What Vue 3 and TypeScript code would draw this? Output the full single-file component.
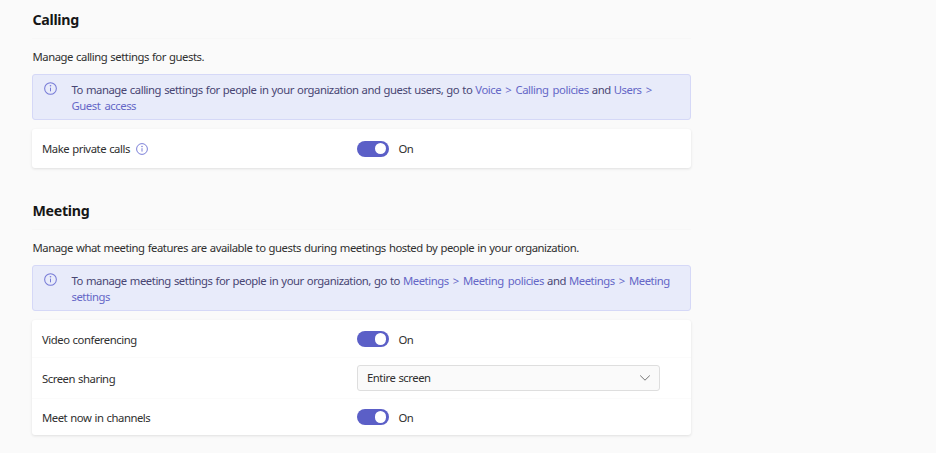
<script setup lang="ts">
import { ref } from 'vue'

interface Part {
  text: string
  link?: boolean
}

interface Row {
  label: string
  info?: boolean
  kind: 'toggle' | 'select'
  on?: boolean
  value?: string
}

interface Section {
  title: string
  description: string
  notice: Part[][]
  rows: Row[]
}

const sections = ref<Section[]>([
  {
    title: 'Calling',
    description: 'Manage calling settings for guests.',
    notice: [
      [
        { text: 'To manage calling settings for people in your organization and guest users, go to ' },
        { text: 'Voice > Calling policies', link: true },
        { text: ' and ' },
        { text: 'Users >', link: true },
      ],
      [{ text: 'Guest access', link: true }],
    ],
    rows: [{ label: 'Make private calls', info: true, kind: 'toggle', on: true }],
  },
  {
    title: 'Meeting',
    description:
      'Manage what meeting features are available to guests during meetings hosted by people in your organization.',
    notice: [
      [
        { text: 'To manage meeting settings for people in your organization, go to ' },
        { text: 'Meetings > Meeting policies', link: true },
        { text: ' and ' },
        { text: 'Meetings > Meeting', link: true },
      ],
      [{ text: 'settings', link: true }],
    ],
    rows: [
      { label: 'Video conferencing', kind: 'toggle', on: true },
      { label: 'Screen sharing', kind: 'select', value: 'Entire screen' },
      { label: 'Meet now in channels', kind: 'toggle', on: true },
    ],
  },
])
</script>

<template>
  <main class="page">
    <section v-for="section in sections" :key="section.title" class="section">
      <h2 class="title">{{ section.title }}</h2>
      <p class="description"><span>{{ section.description }}</span></p>

      <div class="notice">
        <svg class="info" viewBox="0 0 12 12">
          <circle cx="6" cy="6" r="5.4" />
          <path d="M6 5.2v3.4" />
          <circle class="dot" cx="6" cy="3.5" r="0.75" />
        </svg>
        <div class="notice-text">
          <div v-for="(line, i) in section.notice" :key="i" class="line">
            <span v-for="(part, j) in line" :key="j" :class="{ link: part.link }">{{ part.text }}</span>
          </div>
        </div>
      </div>

      <div class="card">
        <div v-for="row in section.rows" :key="row.label" class="row">
          <div class="label">
            <span>{{ row.label }}</span>
            <svg v-if="row.info" class="info small" viewBox="0 0 12 12">
              <circle cx="6" cy="6" r="5.4" />
              <path d="M6 5.2v3.4" />
              <circle class="dot" cx="6" cy="3.5" r="0.75" />
            </svg>
          </div>
          <div v-if="row.kind === 'toggle'" class="control">
            <button
              type="button"
              class="toggle"
              :class="{ on: row.on }"
              @click="row.on = !row.on"
            >
              <span class="knob"></span>
            </button>
            <span class="state">{{ row.on ? 'On' : 'Off' }}</span>
          </div>
          <div v-else class="select">
            <span>{{ row.value }}</span>
            <svg class="chevron" viewBox="0 0 12 8"><path d="M1.2 1.5 6 6.2l4.8-4.7" /></svg>
          </div>
        </div>
      </div>
    </section>
  </main>
</template>

<style>
body {
  background: #fafafa;
}
</style>

<style scoped>
.page {
  box-sizing: border-box;
  height: 453px;
  overflow: hidden;
  padding-left: 32px;
  background: #fafafa;
  color: #303030;
  font: 11.3px/16px 'Noto Sans', 'Open Sans', sans-serif;
  letter-spacing: -0.46px;
  word-spacing: 0.6px;
}
.section {
  width: 659px;
  margin-bottom: 23px;
}
.title {
  height: 38px;
  margin: 0;
  padding-left: 0.5px;
  border-bottom: 1px solid #f7f7f7;
  color: #161616;
  font-size: 14.2px;
  font-weight: 700;
  line-height: 40px;
  letter-spacing: -0.3px;
}
.description {
  height: 35px;
  margin: 0;
  padding-left: 0.5px;
  line-height: 36px;
  white-space: nowrap;
}
.notice {
  box-sizing: border-box;
  display: flex;
  height: 46px;
  padding: 7px 11px;
  border: 1px solid #d5d8f7;
  border-radius: 3px;
  background: #e8ebfa;
  color: #484673;
}
.info {
  flex: none;
  width: 13px;
  height: 13px;
  fill: none;
  stroke: #7579d6;
  stroke-width: 0.95;
}
.info .dot {
  fill: #7579d6;
  stroke: none;
}
.info.small {
  width: 12px;
  height: 12px;
  margin-left: 6px;
}
.notice-text {
  margin-left: 14.5px;
}
.line {
  white-space: pre;
}
.link {
  color: #6567c7;
  word-spacing: 1.7px;
}
.card {
  margin-top: 9px;
  border-radius: 3px;
  background: #fff;
  box-shadow: 0 1px 3px rgba(0, 0, 0, 0.11);
}
.row {
  box-sizing: border-box;
  display: flex;
  align-items: center;
  height: 37px;
  padding-left: 10px;
}
.row:first-child {
  padding-top: 1px;
}
.row:only-child {
  height: 39px;
  padding-top: 0;
}
.row + .row {
  border-top: 1px solid #fbfbfb;
}
.row:nth-child(2) {
  height: 41px;
}
.label {
  display: flex;
  align-items: center;
  width: 315px;
  padding-top: 1px;
}
.control {
  display: flex;
  align-items: center;
}
.toggle {
  box-sizing: border-box;
  display: flex;
  align-items: center;
  width: 32px;
  height: 16px;
  padding: 0 3px;
  border: 0;
  border-radius: 8px;
  background: #b4b4b4;
}
.toggle.on {
  justify-content: flex-end;
  background: #5b5fc7;
}
.knob {
  width: 11.5px;
  height: 11.5px;
  border-radius: 50%;
  background: #fff;
}
.state {
  margin-left: 9.5px;
  padding-top: 1px;
}
.select {
  box-sizing: border-box;
  display: flex;
  align-items: center;
  justify-content: space-between;
  width: 302.5px;
  height: 26px;
  padding: 0 8px 0 9px;
  border: 1px solid #dedede;
  border-radius: 3px;
  background: #fafafa;
}
.chevron {
  width: 12px;
  height: 8px;
  margin-bottom: 1px;
  fill: none;
  stroke: #757575;
}
</style>
